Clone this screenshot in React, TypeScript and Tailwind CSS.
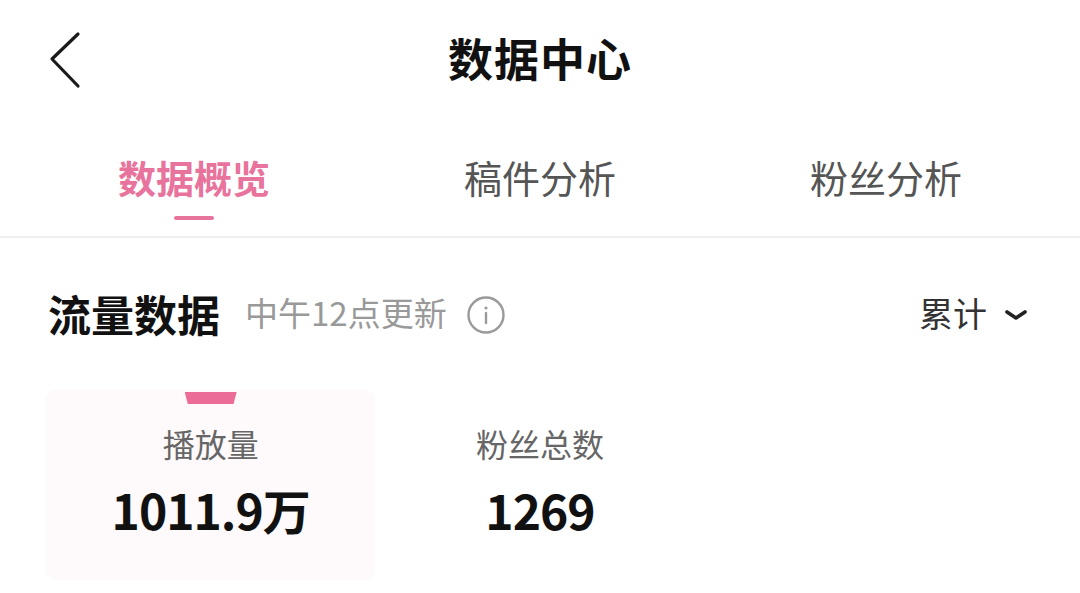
import { useState } from "react";

const TABS = ["数据概览", "稿件分析", "粉丝分析"];

const STATS = [
  { label: "播放量", value: "1011.9万" },
  { label: "粉丝总数", value: "1269" },
];

const FONT = "font-['Noto_Sans_CJK_SC','Noto_Sans',sans-serif]";

export default function App() {
  const [tab, setTab] = useState(0);
  const [stat, setStat] = useState(0);

  return (
    <div className={`min-h-[593px] w-[1080px] bg-white text-[#111] ${FONT}`}>
      {/* header */}
      <div className="grid h-[120px] grid-cols-[1fr_auto_1fr] items-center px-[48px] pb-[4px]">
        <button type="button" className="mt-[4px] flex h-[60px] w-[40px] items-center">
          <svg width="34" height="58" viewBox="0 0 34 58" fill="none">
            <path d="M30 3 L4 28 L30 55" stroke="#1a1a1a" strokeWidth="3.2" strokeLinecap="round" strokeLinejoin="round" />
          </svg>
        </button>
        <h1 className="text-[45px] leading-[60px] font-bold tracking-[1px]">数据中心</h1>
        <div />
      </div>

      {/* tabs */}
      <div className="grid grid-cols-3 border-b-2 border-[#efefef] px-[21px]">
        {TABS.map((t, i) => (
          <button
            key={t}
            type="button"
            onClick={() => setTab(i)}
            className="flex flex-col items-center pt-[35px] pb-[16px]"
          >
            <span
              className={
                i === tab
                  ? "text-[38px] leading-[44px] font-bold text-[#e8739c]"
                  : "text-[38px] leading-[44px] text-[#555]"
              }
            >
              {t}
            </span>
            <span
              className={
                i === tab
                  ? "mt-[17px] h-[4px] w-[40px] rounded-full bg-[#e8739c]"
                  : "mt-[17px] h-[4px] w-[40px]"
              }
            />
          </button>
        ))}
      </div>

      {/* section header */}
      <div className="mt-[45px] flex h-[60px] items-center justify-between pr-[52px] pl-[48px]">
        <div className="flex items-center">
          <h2 className="text-[43px] leading-[60px] font-bold">流量数据</h2>
          <span className="ml-[25px] text-[33px] text-[#999]">中午12点更新</span>
          <svg className="ml-[19px] mt-[3px]" width="40" height="40" viewBox="0 0 40 40" fill="none">
            <circle cx="20" cy="20" r="17.5" stroke="#9a9a9a" strokeWidth="2.4" />
            <circle cx="20" cy="13" r="1.6" fill="#9a9a9a" />
            <path d="M20 18 V28" stroke="#9a9a9a" strokeWidth="2.4" strokeLinecap="round" />
          </svg>
        </div>
        <button type="button" className="flex items-center text-[#333]">
          <span className="text-[34px] leading-[44px]">累计</span>
          <svg className="ml-[17px] mt-[3px]" width="24" height="12" viewBox="0 0 24 12" fill="none">
            <path d="M3 3 L12 9 L21 3" stroke="#222" strokeWidth="3.6" strokeLinecap="round" strokeLinejoin="round" />
          </svg>
        </button>
      </div>

      {/* stats */}
      <div className="mt-[47px] grid grid-cols-3 px-[46px]">
        {STATS.map((s, i) => (
          <button
            key={s.label}
            type="button"
            onClick={() => setStat(i)}
            className={
              i === stat
                ? "flex h-[190px] flex-col items-center rounded-[10px] bg-[#fef9fa]"
                : "flex h-[190px] flex-col items-center"
            }
          >
            <span
              className={
                i === stat
                  ? "mt-[2px] h-[12px] w-[52px] bg-[#ec6c98] [clip-path:polygon(0_0,100%_0,94%_100%,6%_100%)]"
                  : "mt-[2px] h-[12px] w-[52px]"
              }
            />
            <span className="mt-[19px] text-[32px] leading-[40px] text-[#666]">{s.label}</span>
            <span className="mt-[18px] text-[48px] leading-[56px] font-bold tracking-[-1px] text-[#111]">
              {s.value}
            </span>
          </button>
        ))}
      </div>
    </div>
  );
}
